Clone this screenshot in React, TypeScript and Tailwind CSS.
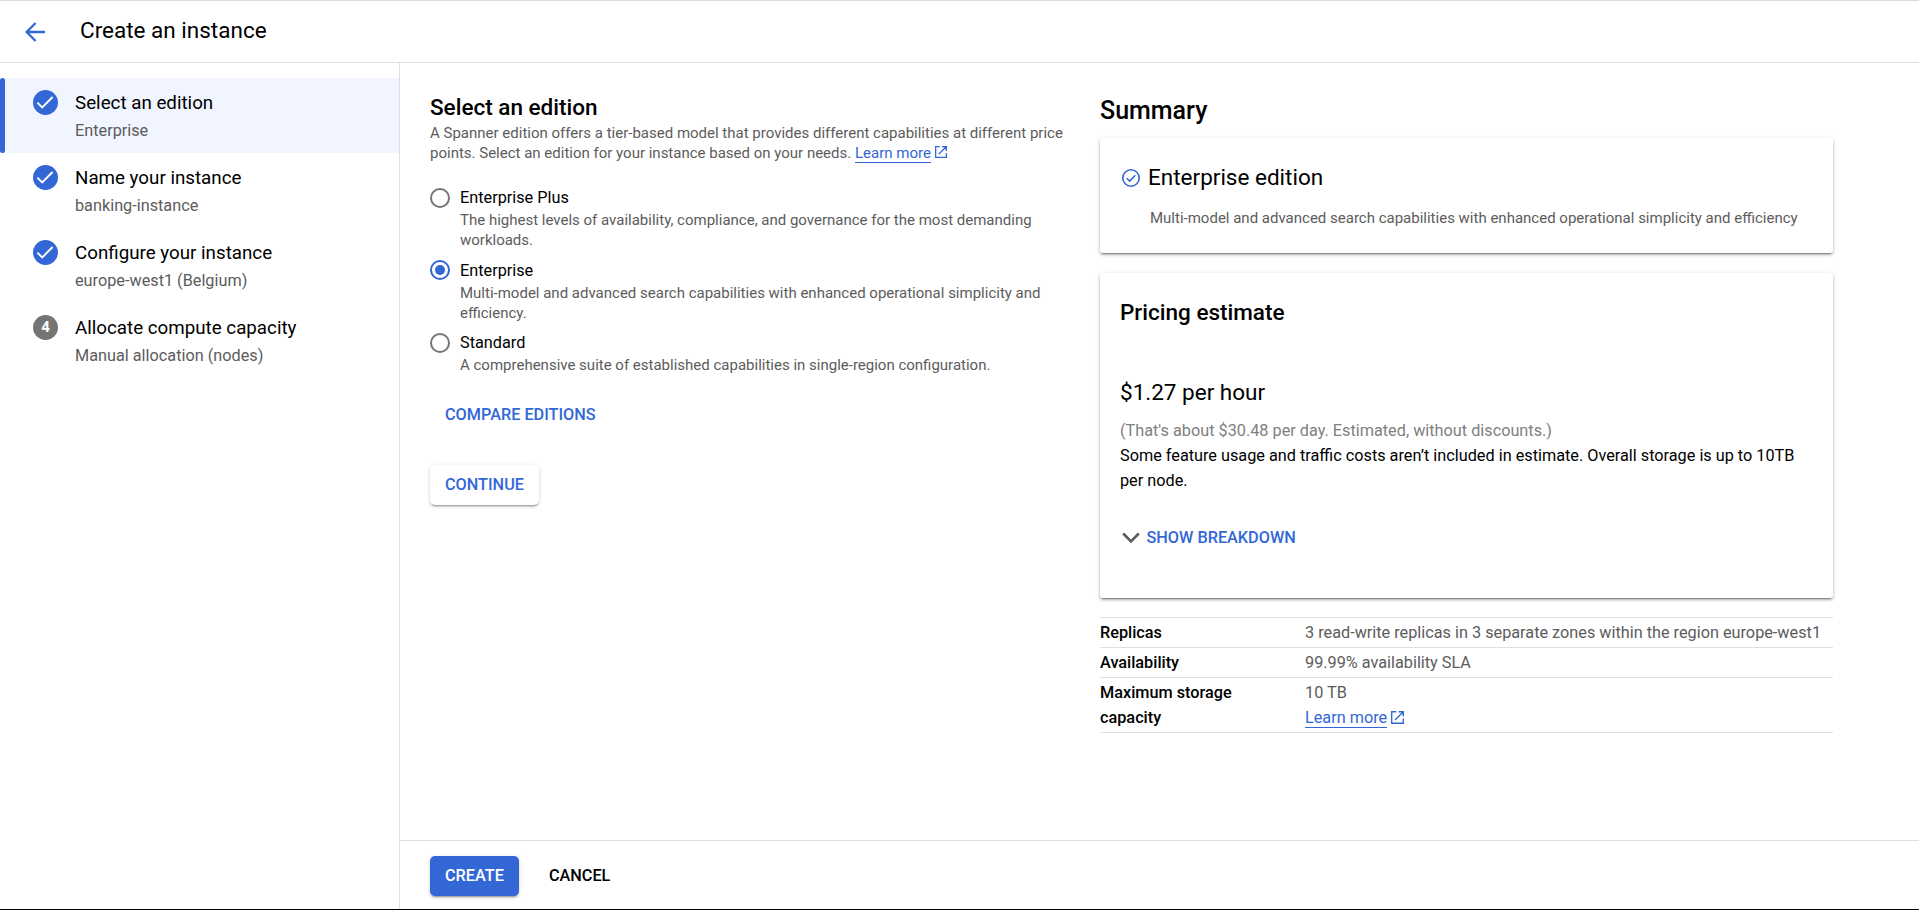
import React from "react";

const steps = [
  { title: "Select an edition", detail: "Enterprise", done: true, active: true },
  { title: "Name your instance", detail: "banking-instance", done: true, active: false },
  { title: "Configure your instance", detail: "europe-west1 (Belgium)", done: true, active: false },
  { title: "Allocate compute capacity", detail: "Manual allocation (nodes)", done: false, active: false },
];

const editions = [
  {
    name: "Enterprise Plus",
    text: "The highest levels of availability, compliance, and governance for the most demanding workloads.",
    checked: false,
  },
  {
    name: "Enterprise",
    text: "Multi-model and advanced search capabilities with enhanced operational simplicity and efficiency.",
    checked: true,
  },
  {
    name: "Standard",
    text: "A comprehensive suite of established capabilities in single-region configuration.",
    checked: false,
  },
];

function ExternalIcon({ className }: { className: string }) {
  return (
    <svg viewBox="0 0 13 13" className={className} fill="none" stroke="currentColor" strokeWidth="1.4">
      <path d="M5.2.7H.7v11.6h11.6V7.6M7.6.7h4.7v4.7M12.1.9 4 9" />
    </svg>
  );
}

function StepBadge({ done, index }: { done: boolean; index: number }) {
  if (!done) {
    return (
      <span className="flex size-[25px] items-center justify-center rounded-full bg-[#757575] text-[15px] font-bold leading-none text-white">
        {index}
      </span>
    );
  }
  return (
    <span className="flex size-[25px] items-center justify-center rounded-full bg-[#3367d6]">
      <svg viewBox="0 0 25 25" className="size-[25px]" fill="none" stroke="#fff" strokeWidth="1.9">
        <path d="M4.4 12.6 9.2 17.4 19.6 7" />
      </svg>
    </span>
  );
}

function Radio({ checked }: { checked: boolean }) {
  return checked ? (
    <span className="flex size-5 items-center justify-center rounded-full border-2 border-[#3367d6]">
      <span className="size-2.5 rounded-full bg-[#3367d6]" />
    </span>
  ) : (
    <span className="block size-5 rounded-full border-2 border-[#757575]" />
  );
}

export default function App() {
  return (
    <div className="flex h-[910px] w-full flex-col overflow-hidden border-t border-b border-t-[#dadce0] border-b-black bg-white font-['Roboto',sans-serif] text-black">
      <header className="flex h-[62px] shrink-0 items-center border-b border-[#e0e0e0]">
        <svg viewBox="0 0 20 20" className="ml-[25px] size-5" fill="none" stroke="#3367d6" strokeWidth="2.3">
          <path d="M20 10H2M10.6 1 1.6 10l9 9" />
        </svg>
        <h1 className="ml-[35px] pb-1 text-[22.5px] leading-[30px]">Create an instance</h1>
      </header>

      <div className="flex min-h-0 flex-1">
        <nav className="w-[400px] shrink-0 border-r border-[#e0e0e0] pt-[15px]">
          {steps.map((s, i) => (
            <div key={s.title} className={s.active ? "flex h-[75px] bg-[#f0f5ff]" : "flex h-[75px]"}>
              <div className={s.active ? "w-[5px] rounded-[3px] bg-[#3367d6]" : "w-[5px]"} />
              <div className="ml-7 mt-3">
                <StepBadge done={s.done} index={i + 1} />
              </div>
              <div className="ml-[17px] pt-[13px]">
                <div className="text-[18.75px] leading-[25px]">{s.title}</div>
                <div className="mt-[2px] text-[16.25px] leading-[25px] text-[#5c5c5c]">{s.detail}</div>
              </div>
            </div>
          ))}
        </nav>

        <div className="flex min-w-0 flex-1 flex-col">
          <main className="flex min-h-0 flex-1 pl-[30px]">
            <section className="w-[640px] pt-[29px]">
              <h2 className="text-[22.5px] font-medium leading-[30px]">Select an edition</h2>
              <p className="mt-px text-[15px] leading-5 text-[#5c5c5c]">
                A Spanner edition offers a tier-based model that provides different capabilities at different price
                <br />
                points. Select an edition for your instance based on your needs.{" "}
                <a className="inline-block border-b border-[#3367d6] leading-[18px] text-[#3367d6]">Learn more</a>
                <ExternalIcon className="mb-1 ml-1 inline size-3 text-[#3367d6]" />
              </p>
              <div className="mt-[22px]">
                {editions.map((e) => (
                  <div key={e.name} className="mb-[7.5px] flex w-[620px]">
                    <div className="pt-[2.9px]">
                      <Radio checked={e.checked} />
                    </div>
                    <div className="ml-[10px]">
                      <div className="text-[16.25px] leading-[25px]">{e.name}</div>
                      <div className="text-[15px] leading-5 text-[#5c5c5c]">{e.text}</div>
                    </div>
                  </div>
                ))}
              </div>
              <button className="mt-5 block h-10 px-[15px] text-[16.25px] font-medium leading-10 text-[#3367d6]">
                COMPARE EDITIONS
              </button>
              <button className="mt-[30px] block h-10 rounded-[5px] px-[15px] text-[16.25px] font-medium leading-10 text-[#3367d6] shadow-[0_3px_1px_-2px_rgba(0,0,0,0.2),0_2px_2px_rgba(0,0,0,0.14),0_1px_5px_rgba(0,0,0,0.12)]">
                CONTINUE
              </button>
            </section>

            <aside className="ml-[30px] w-[733px] pt-[33px]">
              <h2 className="text-[25px] font-medium leading-[30px]">Summary</h2>
              <div className="mt-3 h-[115px] rounded-[3px] pl-[22px] pt-6 shadow-[0_3px_1px_-2px_rgba(0,0,0,0.3),0_2px_3px_rgba(0,0,0,0.24),0_1px_5px_rgba(0,0,0,0.12)]">
                <div className="flex items-center">
                  <svg viewBox="0 0 18 18" className="mt-[2px] size-[18px]" fill="none" stroke="#3367d6" strokeWidth="1.6">
                    <circle cx="9" cy="9" r="8.2" />
                    <path d="M4.8 9.2 7.7 12.1 13.3 6.3" />
                  </svg>
                  <h3 className="ml-2 text-[22.5px] leading-[30px]">Enterprise edition</h3>
                </div>
                <p className="ml-7 mt-4 text-[15px] leading-5 text-[#5c5c5c]">
                  Multi-model and advanced search capabilities with enhanced operational simplicity and efficiency
                </p>
              </div>

              <div className="mt-5 h-[325px] rounded-[3px] px-5 pt-6 shadow-[0_3px_1px_-2px_rgba(0,0,0,0.3),0_2px_3px_rgba(0,0,0,0.24),0_1px_5px_rgba(0,0,0,0.12)]">
                <h3 className="text-[22.5px] font-medium leading-[30px]">Pricing estimate</h3>
                <div className="mt-[50px] text-[22.5px] leading-[30px]">$1.27 per hour</div>
                <div className="mt-[11px] text-[16.25px] leading-[25px] text-[#808080]">
                  (That's about $30.48 per day. Estimated, without discounts.)
                </div>
                <p className="text-[16.25px] leading-[25px]">
                  Some feature usage and traffic costs aren’t included in estimate. Overall storage is up to 10TB per node.
                </p>
                <button className="mt-[32px] flex items-center text-[16.25px] font-medium leading-[25px] text-[#3367d6]">
                  <svg viewBox="0 0 18 12" className="ml-[2px] mr-[6.5px] h-3 w-[18px]" fill="none" stroke="#5c5c5c" strokeWidth="2.6">
                    <path d="M1.2 1.5 9 9.3l7.8-7.8" />
                  </svg>
                  SHOW BREAKDOWN
                </button>
              </div>

              <div className="mt-[19px] divide-y divide-[#e0e0e0] border-y border-[#e0e0e0] text-[16.25px] leading-[25px]">
                <div className="flex py-[2px]">
                  <div className="w-[205px] font-medium">Replicas</div>
                  <div className="text-[#5c5c5c]">3 read-write replicas in 3 separate zones within the region europe-west1</div>
                </div>
                <div className="flex py-[2px]">
                  <div className="w-[205px] font-medium">Availability</div>
                  <div className="text-[#5c5c5c]">99.99% availability SLA</div>
                </div>
                <div className="flex py-[2px]">
                  <div className="w-[205px] pr-10 font-medium">Maximum storage capacity</div>
                  <div className="text-[#5c5c5c]">
                    10 TB
                    <div className="flex h-[25px] items-start pt-[3px] text-[#3367d6]">
                      <a className="border-b border-[#3367d6] leading-[19px]">Learn more</a>
                      <ExternalIcon className="ml-[3.5px] mt-[3px] size-[13px]" />
                    </div>
                  </div>
                </div>
              </div>
            </aside>
          </main>

          <footer className="flex h-[69px] shrink-0 border-t border-[#e0e0e0] pl-[30px] pt-[15px]">
            <button className="h-10 rounded-[5px] bg-[#3367d6] px-[15px] text-[16.25px] font-medium leading-10 text-white shadow-[0_3px_1px_-2px_rgba(0,0,0,0.2),0_2px_2px_rgba(0,0,0,0.14),0_1px_5px_rgba(0,0,0,0.12)]">
              CREATE
            </button>
            <button className="ml-[15px] h-10 px-[15px] text-[16.25px] font-medium leading-10">CANCEL</button>
          </footer>
        </div>
      </div>
    </div>
  );
}
